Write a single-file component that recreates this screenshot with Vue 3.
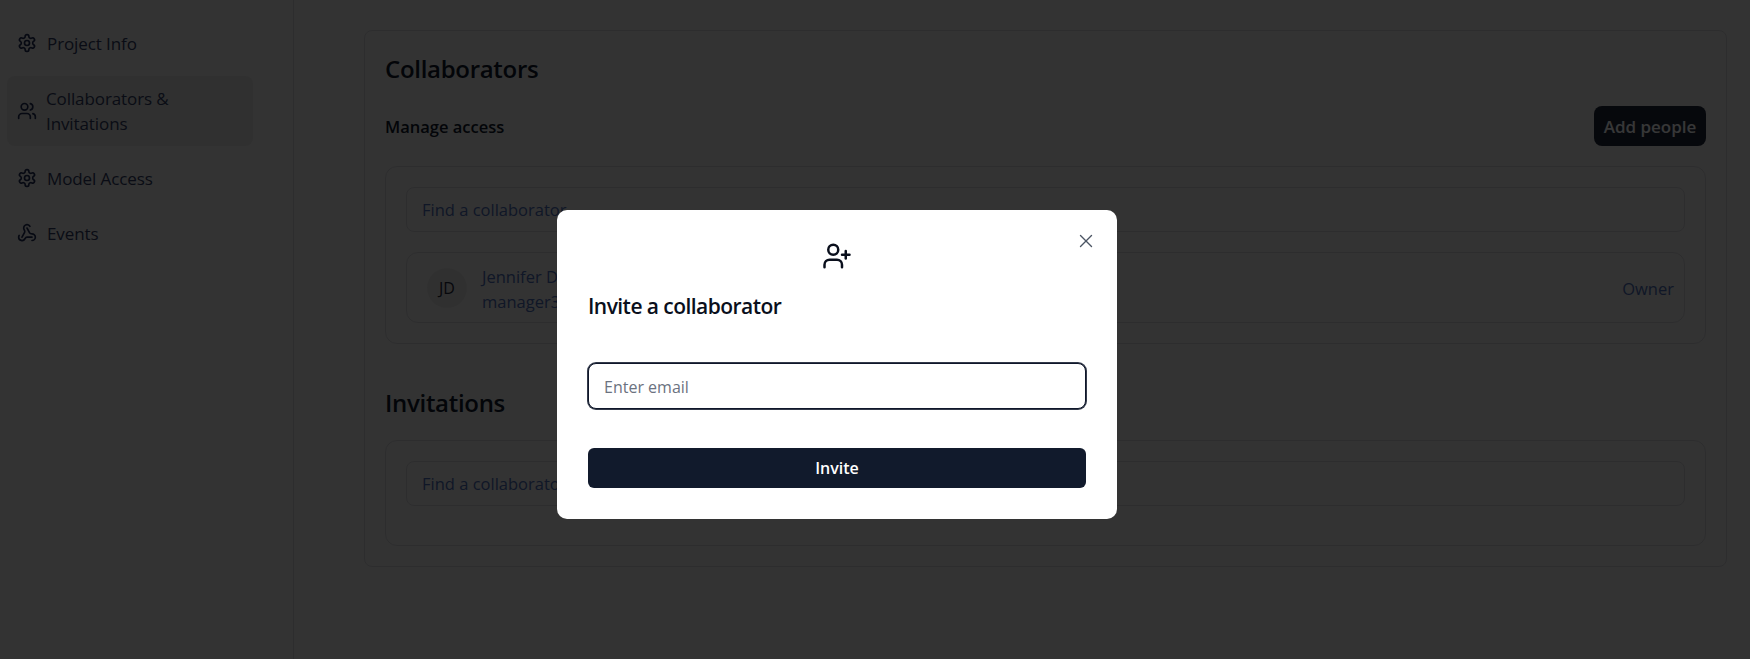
<script setup>
const navItems = [
  { label: 'Project Info', icon: 'settings' },
  { label: 'Collaborators & Invitations', icon: 'users', active: true },
  { label: 'Model Access', icon: 'settings' },
  { label: 'Events', icon: 'webhook' },
]
</script>

<template>
  <div class="page">
    <aside class="sidebar">
      <a
        v-for="item in navItems"
        :key="item.label"
        class="nav-item"
        :class="{ active: item.active }"
      >
        <svg class="nav-icon" xmlns="http://www.w3.org/2000/svg" viewBox="0 0 24 24" fill="none" stroke="currentColor" stroke-width="2" stroke-linecap="round" stroke-linejoin="round">
          <template v-if="item.icon === 'settings'">
            <path d="M12.22 2h-.44a2 2 0 0 0-2 2v.18a2 2 0 0 1-1 1.73l-.43.25a2 2 0 0 1-2 0l-.15-.08a2 2 0 0 0-2.73.73l-.22.38a2 2 0 0 0 .73 2.73l.15.1a2 2 0 0 1 1 1.72v.51a2 2 0 0 1-1 1.74l-.15.09a2 2 0 0 0-.73 2.73l.22.38a2 2 0 0 0 2.73.73l.15-.08a2 2 0 0 1 2 0l.43.25a2 2 0 0 1 1 1.73V20a2 2 0 0 0 2 2h.44a2 2 0 0 0 2-2v-.18a2 2 0 0 1 1-1.73l.43-.25a2 2 0 0 1 2 0l.15.08a2 2 0 0 0 2.73-.73l.22-.39a2 2 0 0 0-.73-2.73l-.15-.08a2 2 0 0 1-1-1.74v-.5a2 2 0 0 1 1-1.74l.15-.09a2 2 0 0 0 .73-2.73l-.22-.38a2 2 0 0 0-2.73-.73l-.15.08a2 2 0 0 1-2 0l-.43-.25a2 2 0 0 1-1-1.73V4a2 2 0 0 0-2-2z" />
            <circle cx="12" cy="12" r="3" />
          </template>
          <template v-else-if="item.icon === 'users'">
            <path d="M16 21v-2a4 4 0 0 0-4-4H6a4 4 0 0 0-4 4v2" />
            <circle cx="9" cy="7" r="4" />
            <path d="M22 21v-2a4 4 0 0 0-3-3.87" />
            <path d="M16 3.13a4 4 0 0 1 0 7.75" />
          </template>
          <template v-else>
            <path d="M18 16.98h-5.99c-1.1 0-1.95.94-2.48 1.9A4 4 0 0 1 2 17c.01-.7.2-1.4.57-2" />
            <path d="m6 17 3.13-5.78c.53-.97.1-2.18-.5-3.1a4 4 0 1 1 6.89-4.06" />
            <path d="m12 6 3.13 5.73C15.66 12.7 16.9 13 18 13a4 4 0 0 1 0 8" />
          </template>
        </svg>
        <span>{{ item.label }}</span>
      </a>
    </aside>

    <main class="content">
      <section class="card">
        <h2 class="section-title">Collaborators</h2>
        <div class="manage-row">
          <span class="manage-label">Manage access</span>
          <button class="add-btn">Add people</button>
        </div>
        <div class="panel">
          <input class="find-input" placeholder="Find a collaborator" />
          <div class="member">
            <div class="member-left">
              <div class="avatar">JD</div>
              <div class="member-info">
                <div>Jennifer Davis</div>
                <div>manager3@example.com</div>
              </div>
            </div>
            <span class="role">Owner</span>
          </div>
        </div>

        <h2 class="section-title invitations">Invitations</h2>
        <div class="panel panel-empty">
          <input class="find-input" placeholder="Find a collaborator" />
        </div>
      </section>
    </main>

    <div class="overlay"></div>

    <div class="modal">
      <button class="close-btn" aria-label="Close">
        <svg xmlns="http://www.w3.org/2000/svg" width="22" height="22" viewBox="0 0 24 24" fill="none" stroke="currentColor" stroke-width="1.5" stroke-linecap="round" stroke-linejoin="round"><path d="M18 6 6 18" /><path d="m6 6 12 12" /></svg>
      </button>
      <svg class="modal-icon" xmlns="http://www.w3.org/2000/svg" viewBox="0 0 24 24" fill="none" stroke="currentColor" stroke-width="2" stroke-linecap="round" stroke-linejoin="round">
        <path d="M16 21v-2a4 4 0 0 0-4-4H6a4 4 0 0 0-4 4v2" />
        <circle cx="9" cy="7" r="4" />
        <line x1="19" y1="8" x2="19" y2="14" />
        <line x1="22" y1="11" x2="16" y2="11" />
      </svg>
      <h3 class="modal-title">Invite a collaborator</h3>
      <input class="email-input" placeholder="Enter email" />
      <button class="invite-btn">Invite</button>
    </div>
  </div>
</template>

<style>
html, body {
  margin: 0;
  background: #e8e8e8;
}
</style>

<style scoped>
.page {
  position: relative;
  display: flex;
  height: 659px;
  overflow: hidden;
  font-family: "Open Sans", "Noto Sans", sans-serif;
  color: #0f172a;
  background: #e8e8e8;
}

.sidebar {
  width: 294px;
  box-sizing: border-box;
  border-right: 1px solid #cdcdd2;
  padding: 20.5px 40px 0 7px;
  display: flex;
  flex-direction: column;
  gap: 10px;
  flex-shrink: 0;
}

.nav-item {
  display: flex;
  align-items: center;
  gap: 10px;
  height: 45px;
  padding: 0 10px;
  border-radius: 8px;
  font-size: 17px;
  letter-spacing: -0.1px;
  line-height: 25px;
  color: #2f3a60;
}

.nav-item.active {
  background: #dadada;
  height: 70px;
  gap: 9px;
}

.nav-icon {
  width: 20px;
  height: 20px;
  flex-shrink: 0;
  color: #1e2a52;
}

.content {
  flex: 1;
  padding: 30px 23px 0 70px;
}

.card {
  border: 1px solid #cdcdd2;
  border-radius: 8px;
  padding: 22px 20px 20px;
  height: 537px;
  box-sizing: border-box;
}

.section-title {
  margin: 0;
  font-size: 24px;
  line-height: 32px;
  font-weight: 600;
  letter-spacing: -0.3px;
}

.manage-row {
  display: flex;
  justify-content: space-between;
  align-items: center;
  margin-top: 21px;
}

.manage-label {
  font-size: 16.5px;
  font-weight: 600;
  margin-top: 1px;
}

.add-btn {
  height: 40px;
  width: 112px;
  border: none;
  border-radius: 8px;
  background: #1e2538;
  color: #f8fafc;
  font-family: inherit;
  font-size: 17px;
  font-weight: 600;
  padding: 0;
}

.panel {
  margin-top: 20px;
  border: 1px solid #cdcdd2;
  border-radius: 12px;
  padding: 20px;
  display: flex;
  flex-direction: column;
  gap: 20px;
}

.panel-empty {
  height: 106px;
  box-sizing: border-box;
  margin-top: 21px;
}

.find-input {
  height: 45px;
  box-sizing: border-box;
  border: 1px solid #cdcdd2;
  border-radius: 8px;
  padding: 0 15px;
  font-family: inherit;
  font-size: 16.5px;
  outline: none;
  background: transparent;
}

.find-input::placeholder {
  color: #4a68b0;
  opacity: 1;
}

.member {
  height: 71px;
  box-sizing: border-box;
  border: 1px solid #cdcdd2;
  border-radius: 12px;
  padding: 2px 10px 0 20px;
  display: flex;
  align-items: center;
  justify-content: space-between;
  font-size: 16.5px;
  color: #4a68b0;
}

.member-left {
  display: flex;
  align-items: center;
  gap: 15px;
}

.avatar {
  width: 40px;
  height: 40px;
  margin-top: -2px;
  border-radius: 50%;
  background: #dcdcdc;
  color: #1e2538;
  font-size: 16px;
  display: flex;
  align-items: center;
  justify-content: center;
}

.member-info {
  line-height: 25px;
}

.invitations {
  margin-top: 43px;
}

.overlay {
  position: absolute;
  inset: 0;
  background: rgba(0, 0, 0, 0.78);
}

.modal {
  position: absolute;
  left: 557px;
  top: 210px;
  width: 560px;
  height: 309px;
  box-sizing: border-box;
  padding: 31px 30px;
  background: #fff;
  border-radius: 10px;
  display: flex;
  flex-direction: column;
}

.close-btn {
  position: absolute;
  top: 20px;
  right: 20px;
  width: 22px;
  height: 22px;
  padding: 0;
  border: none;
  background: none;
  color: #4b5563;
}

.modal-icon {
  width: 30px;
  height: 30px;
  align-self: center;
  color: #0a0f1c;
  flex-shrink: 0;
}

.modal-title {
  margin: 20px 0 0 1px;
  font-size: 21px;
  line-height: 30px;
  font-weight: 600;
  letter-spacing: -0.55px;
  color: #0a0f1c;
}

.email-input {
  margin: 42px 1px 0;
  height: 47px;
  box-sizing: border-box;
  border: 1px solid #0f172a;
  box-shadow: 0 0 0 1px rgba(15, 23, 42, 0.85);
  border-radius: 8px;
  padding: 1px 15px 0;
  font-family: inherit;
  font-size: 16px;
  outline: none;
}

.email-input::placeholder {
  color: #6b7280;
}

.invite-btn {
  margin: 39px 1px 0;
  height: 40px;
  border: none;
  border-radius: 6px;
  background: #111a2c;
  color: #fff;
  font-family: inherit;
  font-size: 16px;
  font-weight: 600;
}
</style>
